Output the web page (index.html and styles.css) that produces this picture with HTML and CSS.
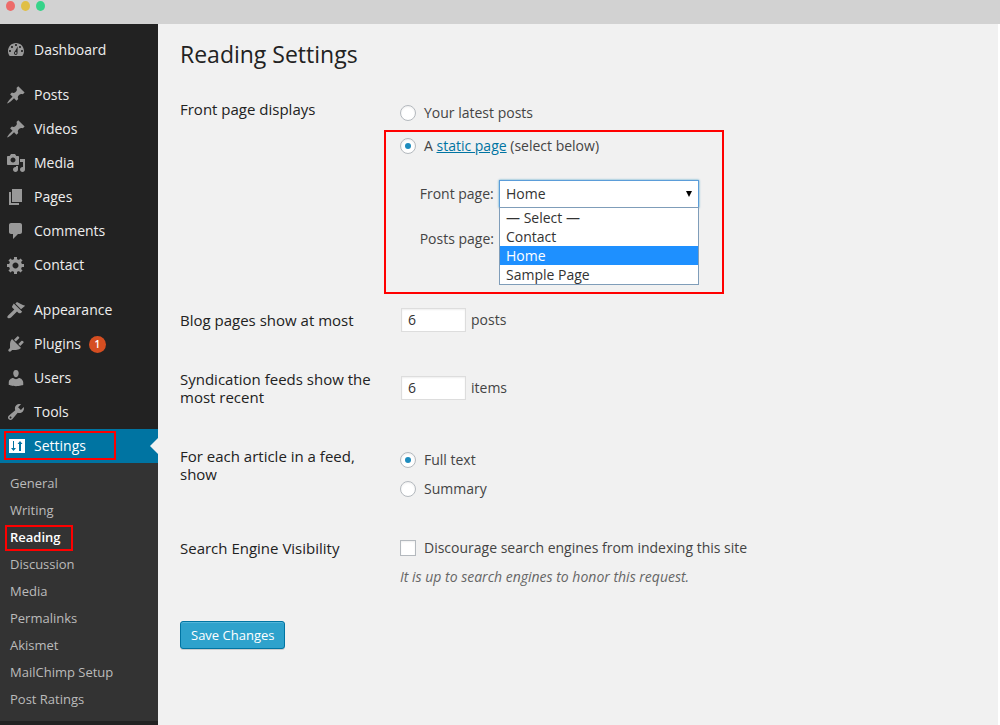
FILE: index.html
```html
<!DOCTYPE html>
<html lang="en">
<head>
	<meta charset="UTF-8">
	<meta name="viewport" content="width=device-width, initial-scale=1">
	<title>Reading Settings</title>
	<link rel="stylesheet" href="styles.css">
</head>
<body>
	<div class="titlebar">
		<span class="dot dot-red"></span>
		<span class="dot dot-yellow"></span>
		<span class="dot dot-green"></span>
	</div>

	<div class="wrap">
		<nav class="sidebar">
			<ul class="menu">
				<li><a href="#"><svg class="icon" viewBox="0 0 20 20"><path fill-rule="evenodd" d="M3.76 16h12.48c1.1-1.37 1.76-3.11 1.76-5 0-4.42-3.58-8-8-8s-8 3.58-8 8c0 1.89.66 3.63 1.76 5zM10 4c.55 0 1 .45 1 1s-.45 1-1 1-1-.45-1-1 .45-1 1-1zM6 6c.55 0 1 .45 1 1s-.45 1-1 1-1-.45-1-1 .45-1 1-1zm8 0c.55 0 1 .45 1 1s-.45 1-1 1-1-.45-1-1 .45-1 1-1zM11.700 6.500L11.500 13c0 1.100-.700 2-1.700 2s-1.800-.9-1.800-2c0-.8.4-1.400 1-1.800zM4 10c.55 0 1 .45 1 1s-.45 1-1 1-1-.45-1-1 .45-1 1-1zm12 0c.55 0 1 .45 1 1s-.45 1-1 1-1-.45-1-1 .45-1 1-1zm-5.300 3c0-.5-.4-.9-.9-.9s-.9.4-.9.9.4.9.9.9.9-.4.9-.9z"/></svg>Dashboard</a></li>
				<li class="first"><a href="#"><svg class="icon" viewBox="0 0 20 20"><path d="M10.44 3.02l1.82-1.82 6.36 6.35-1.83 1.82c-1.05-.68-2.48-.57-3.41.36l-.75.75c-.92.93-1.04 2.35-.35 3.41l-1.83 1.82-2.41-2.41-2.8 2.79c-.42.42-3.38 2.71-3.8 2.29s1.86-3.39 2.28-3.81l2.79-2.79L4.1 9.36l1.83-1.82c1.05.69 2.48.57 3.4-.36l.75-.75c.93-.92 1.05-2.35.36-3.41z"/></svg>Posts</a></li>
				<li><a href="#"><svg class="icon" viewBox="0 0 20 20"><path d="M10.44 3.02l1.82-1.82 6.36 6.35-1.83 1.82c-1.05-.68-2.48-.57-3.41.36l-.75.75c-.92.93-1.04 2.35-.35 3.41l-1.83 1.82-2.41-2.41-2.8 2.79c-.42.42-3.38 2.71-3.8 2.29s1.86-3.39 2.28-3.81l2.79-2.79L4.1 9.36l1.83-1.82c1.05.69 2.48.57 3.4-.36l.75-.75c.93-.92 1.05-2.35.36-3.41z"/></svg>Videos</a></li>
				<li><a href="#"><svg class="icon" viewBox="0 0 20 20"><path fill-rule="evenodd" d="M13 11V4c0-.55-.45-1-1-1h-1.67L9 1H5L3.67 3H2c-.55 0-1 .45-1 1v7c0 .55.45 1 1 1h10c.55 0 1-.45 1-1zM7 4.5c1.38 0 2.5 1.12 2.5 2.5S8.38 9.5 7 9.5 4.5 8.38 4.5 7 5.62 4.5 7 4.5zM14 6h5v10.5c0 1.38-1.12 2.5-2.5 2.5S14 17.88 14 16.5s1.12-2.5 2.5-2.5c.17 0 .34.02.5.05V9h-3V6zm-4 8.05V13h2v3.5c0 1.38-1.12 2.5-2.5 2.5S7 17.88 7 16.5 8.12 14 9.5 14c.17 0 .34.02.5.05z"/></svg>Media</a></li>
				<li><a href="#"><svg class="icon" viewBox="0 0 20 20"><path d="M6 15V2h10v13H6zm-1 1h8v2H3V5h2v11z"/></svg>Pages</a></li>
				<li><a href="#"><svg class="icon" viewBox="0 0 20 20"><path d="M5 2h9c1.1 0 2 .9 2 2v7c0 1.1-.9 2-2 2h-2l-5 5v-5H5c-1.1 0-2-.9-2-2V4c0-1.1.9-2 2-2z"/></svg>Comments</a></li>
				<li><a href="#"><svg class="icon" viewBox="0 0 20 20"><path fill-rule="evenodd" d="M18 12h-2.18c-.17.7-.44 1.35-.81 1.93l1.54 1.54-2.1 2.1-1.54-1.54c-.58.36-1.23.63-1.91.79V19H8v-2.18c-.68-.16-1.33-.43-1.91-.79l-1.54 1.54-2.12-2.12 1.54-1.54c-.36-.58-.63-1.23-.79-1.91H1V9.03h2.17c.16-.7.44-1.35.8-1.94L2.43 5.55l2.1-2.1 1.54 1.54c.58-.37 1.24-.64 1.93-.81V2h3v2.18c.68.16 1.33.43 1.91.79l1.54-1.54 2.12 2.12-1.54 1.54c.36.59.64 1.24.8 1.94H18V12zm-8.5 1.5c1.66 0 3-1.34 3-3s-1.34-3-3-3-3 1.34-3 3 1.34 3 3 3z"/></svg>Contact</a></li>
				<li class="first"><a href="#"><svg class="icon" viewBox="0 0 20 20"><path d="M9.300 3.600L11 2c2.500 1.500 5 2.800 8.200 3.700L15 9.300zM7.800 3.600l8.400 8.200-1.300 1.200c-.9.6-1.900.4-2.600-.3l-1.300-1.100-6 6c-.9.9-2.200.9-3.100.5-.9-.8-.7-1.900.2-2.700l6.200-5.800-1.600-1.600c-.8-.9-.8-1.800-.1-2.600z"/></svg>Appearance</a></li>
				<li><a href="#"><svg class="icon" viewBox="0 0 20 20"><path d="M13.11 4.36L9.87 7.6 8 5.73l3.24-3.24c.35-.34 1.05-.2 1.56.32.52.51.66 1.21.31 1.55zm-8 1.77l.91-1.12 9.01 9.01-1.19.84c-.71.71-2.63 1.16-3.82 1.16H6.14L4.9 17.26c-.59.59-1.54.59-2.12 0-.59-.58-.59-1.53 0-2.12l1.24-1.24v-3.88c0-1.13.4-3.19 1.09-3.89zm7.26 3.97l3.24-3.24c.34-.35 1.04-.21 1.55.31.52.51.66 1.21.31 1.55l-3.24 3.25z"/></svg>Plugins<span class="count">1</span></a></li>
				<li><a href="#"><svg class="icon" viewBox="0 0 20 20"><path d="M10 9.25c-2.27 0-2.73-3.44-2.73-3.44C7 4.02 7.82 2 9.97 2c2.16 0 2.98 2.02 2.71 3.81 0 0-.41 3.44-2.68 3.44zm-2.700.75c.8.700 1.600 1.200 2.700 1.200s1.900-.5 2.720-1.200c2.39 0 4.52 2.33 4.52 4.53v2.49s-3.65 1.13-7.24 1.13c-3.65 0-7.24-1.13-7.24-1.13v-2.49c0-2.25 1.94-4.53 4.54-4.53z"/></svg>Users</a></li>
				<li><a href="#"><svg class="icon" viewBox="0 0 20 20"><path fill-rule="evenodd" d="M16.68 9.77c-1.34 1.34-3.3 1.67-4.95.99l-5.41 6.52c-.99.99-2.59.99-3.58 0s-.99-2.59 0-3.57l6.52-5.42c-.68-1.65-.35-3.61.99-4.95 1.28-1.28 3.12-1.62 4.72-1.06l-2.89 2.89 2.82 2.82 2.86-2.87c.53 1.58.18 3.39-1.08 4.65zM3.81 16.21c.4.39 1.04.39 1.43 0 .4-.4.4-1.04 0-1.43-.39-.4-1.03-.4-1.43 0-.39.39-.39 1.03 0 1.43z"/></svg>Tools</a></li>
				<li class="current">
					<a href="#"><svg class="icon" viewBox="0 0 20 20"><path fill-rule="evenodd" d="M3 3h16v14H3zM7 5v7H5l2.500 3 2.500-3H8V5zM14 5l-2.500 3H13v7h2V8h1.500z"/></svg>Settings</a>
					<span class="mark mark-settings"></span>
				</li>
			</ul>
			<ul class="submenu">
				<li><a href="#">General</a></li>
				<li><a href="#">Writing</a></li>
				<li class="current"><a href="#">Reading</a><span class="mark mark-reading"></span></li>
				<li><a href="#">Discussion</a></li>
				<li><a href="#">Media</a></li>
				<li><a href="#">Permalinks</a></li>
				<li><a href="#">Akismet</a></li>
				<li><a href="#">MailChimp Setup</a></li>
				<li><a href="#">Post Ratings</a></li>
			</ul>
		</nav>

		<main class="content">
			<h1>Reading Settings</h1>
			<form>
				<div class="row row-front" role="group" aria-labelledby="front-label">
					<div class="label" id="front-label">Front page displays</div>
					<div class="field">
						<label class="option"><input type="radio" name="front">Your latest posts</label>
						<div class="highlight">
							<div class="option">
								<input type="radio" name="front" id="front-static" checked>
								<label for="front-static">A <a href="#">static page</a> (select below)</label>
							</div>
							<div class="pages">
								<label for="page-front">Front page:</label>
								<div class="dropdown">
									<select id="page-front" class="focus"><option>Home</option></select>
									<ul class="list">
										<li>— Select —</li>
										<li>Contact</li>
										<li class="selected">Home</li>
										<li>Sample Page</li>
									</ul>
								</div>
								<label for="page-posts">Posts page:</label>
								<select id="page-posts"></select>
							</div>
						</div>
					</div>
				</div>

				<div class="row row-blog">
					<label class="label" for="blog-posts">Blog pages show at most</label>
					<div class="number"><input type="text" id="blog-posts" value="6">posts</div>
				</div>

				<div class="row row-items">
					<label class="label" for="feed-items">Syndication feeds show the most recent</label>
					<div class="number"><input type="text" id="feed-items" value="6">items</div>
				</div>

				<div class="row" role="group" aria-labelledby="feed-label">
					<div class="label" id="feed-label">For each article in a feed, show</div>
					<div class="field field-feed">
						<label class="option"><input type="radio" name="feed" checked>Full text</label>
						<label class="option"><input type="radio" name="feed">Summary</label>
					</div>
				</div>

				<div class="row" role="group" aria-labelledby="search-label">
					<div class="label" id="search-label">Search Engine Visibility</div>
					<div>
						<label class="option"><input type="checkbox">Discourage search engines from indexing this site</label>
						<p class="description">It is up to search engines to honor this request.</p>
					</div>
				</div>

				<button type="submit" class="button">Save Changes</button>
			</form>
		</main>
	</div>
</body>
</html>
```
FILE: styles.css
```css
*{ box-sizing: border-box; margin: 0; padding: 0;}
body{ display: flex; flex-direction: column; min-height: 100vh; background: #fff; color: #444; font: 14px/18px "Open Sans", sans-serif;}
ul{ list-style: none;}
a{ color: #0074a2;}

.titlebar{ display: flex; gap: 6px; height: 24px; padding: 1px 6px; background: #d2d2d2;}
.dot{ width: 9px; height: 10px; border-radius: 50%;}
.dot-red{ background: #ed6b69;}
.dot-yellow{ background: #e0bf45;}
.dot-green{ background: #36d389;}

.wrap{ display: flex; flex: 1;}

/* sidebar */
.sidebar{ flex: none; width: 158px; padding-top: 9px; background: #222;}
.sidebar li{ position: relative;}
.sidebar a{ display: flex; align-items: center; text-decoration: none;}
.menu a{ height: 34px; padding-left: 6px; gap: 8px; color: #eee;}
.menu .first{ margin-top: 11px;}
.icon{ width: 20px; height: 20px; fill: #999;}
.count{ width: 17px; height: 17px; border-radius: 50%; background: #d54e21; color: #fff; font-size: 10px; font-weight: 600; line-height: 17px; text-align: center;}
.menu .current a{ background: #0074a2; color: #fff;}
.menu .current .icon{ fill: #fff;}
.menu .current a::after{ content: ""; margin-left: auto; border: 8px solid transparent; border-right-color: #f1f1f1; border-left: 0;}
.submenu{ padding: 6px 0 9px; background: #333;}
.submenu a{ height: 27px; padding-left: 10px; color: #bbb; font-size: 13px;}
.submenu .current a{ color: #fff; font-weight: 600;}

/* red frames around the important places */
.mark{ position: absolute; border: 2px solid #f00; pointer-events: none;}
.mark-settings{ top: 2px; left: 4px; width: 112px; height: 29px;}
.mark-reading{ top: 2px; left: 5px; width: 68px; height: 26px;}
.highlight{ width: 340px; margin: 8px 0 0 -16px; padding: 5px 23px 39px 14px; border: 2px solid #f00;}

/* settings form */
.content{ flex: 1; margin-right: 2px; padding: 15px 20px 20px 22px; background: #f1f1f1;}
h1{ margin-bottom: 31px; color: #222; font-size: 23px; font-weight: 400; line-height: 30px;}
.row{ display: grid; grid-template-columns: 200px 1fr; column-gap: 20px; align-items: start; margin-bottom: 41px;}
.row-front{ margin-bottom: 14px;}
.row-blog{ align-items: center; margin-bottom: 38px;}
.row-items{ align-items: center;}
.label{ color: #222; font-size: 15px;}
.field{ padding-top: 4px;}
.field-feed{ display: grid; gap: 11px;}
.option{ display: flex; align-items: center; gap: 8px;}
.number{ display: flex; align-items: center; gap: 5px; padding-left: 1px;}

input, select{ border: 1px solid #ddd; background: #fff; color: #333; font: inherit; outline: 0;}
input{ box-shadow: inset 0 1px 2px rgba(0,0,0,.07);}
input[type=text]{ width: 65px; height: 24px; padding: 0 6px 1px;}
input[type=radio], input[type=checkbox]{ appearance: none; width: 16px; height: 16px; border-color: #b4b9be;}
input[type=radio]{ display: grid; place-content: center; border-radius: 50%;}
input[type=radio]:checked::before{ content: ""; width: 6px; height: 6px; border-radius: 50%; background: #1e8cbe;}

.pages{ display: grid; grid-template-columns: auto 200px; align-items: center; justify-content: end; gap: 17px 5px; margin-top: 25px;}
select{ appearance: none; display: block; width: 100%; height: 28px; padding: 0 6px;}
.focus{ border-color: #5b9dd9; box-shadow: 0 0 2px rgba(30,140,190,.8);}
.dropdown{ position: relative;}
.dropdown::after{ content: ""; position: absolute; top: 11px; right: 7px; border: 3px solid transparent; border-top: 6px solid #000; border-bottom: 0;}
.list{ position: absolute; z-index: 1; top: 27px; left: 0; width: 100%; border: 1px solid #7f9db9; background: #fff; color: #333;}
.list li{ padding: 0 6px; line-height: 19px;}
.list .selected{ background: #1e90ff; color: #fff;}

.description{ margin-top: 11px; color: #666; font-style: italic;}
.button{ display: block; height: 28px; margin-top: -6px; padding: 0 10px; border: 1px solid #0074a2; border-radius: 3px; background: #2ea2cc; box-shadow: inset 0 1px 0 rgba(120,200,230,.5), 0 1px 0 rgba(0,0,0,.15); color: #fff; font: 13px/26px "Open Sans", sans-serif;}
```
